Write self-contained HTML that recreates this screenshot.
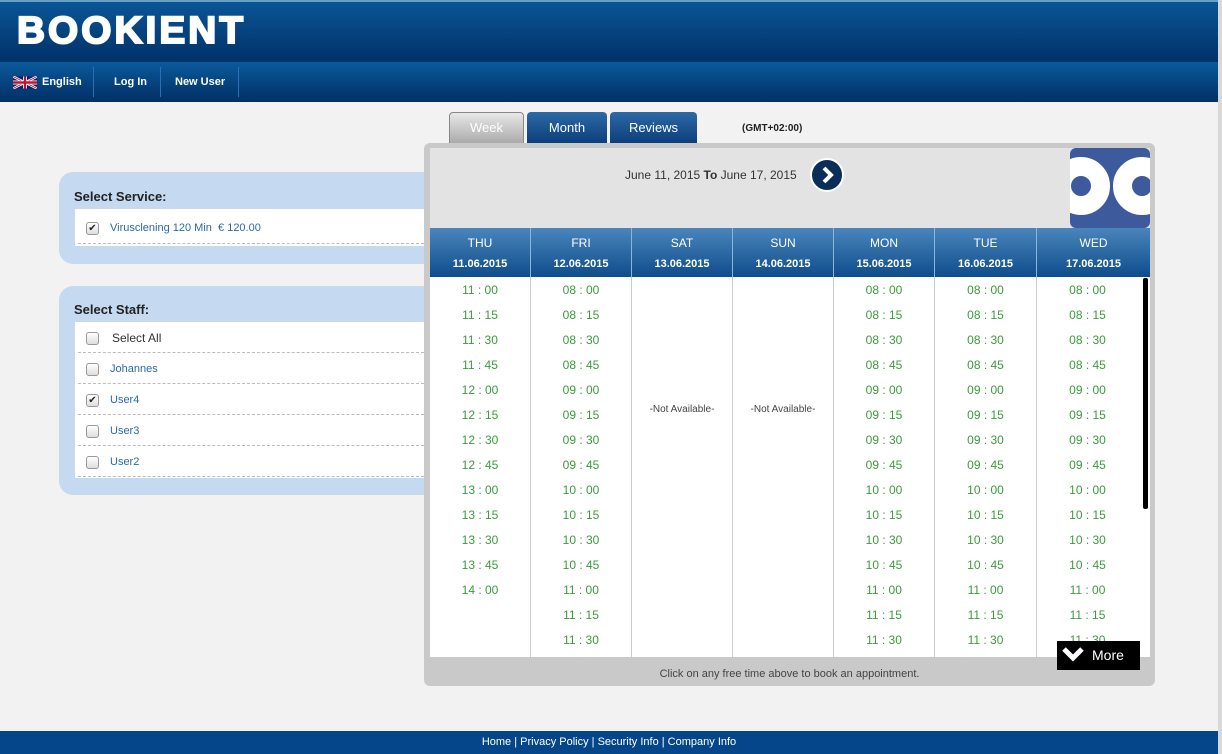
<!DOCTYPE html>
<html><head><meta charset="utf-8">
<style>
*{margin:0;padding:0;box-sizing:border-box}
body{width:1222px;height:754px;background:#f2f2f2;font-family:"Liberation Sans",sans-serif;position:relative;overflow:hidden}
.a{position:absolute}
#hdr{left:0;top:0;width:1218px;height:62px;background:linear-gradient(#0a5596,#013168);border-top:2px solid #6aa0c8}
#logo{left:17px;top:10px;color:#fff;font:900 38px "Liberation Sans",sans-serif;letter-spacing:3px;-webkit-text-stroke:2px #fff;transform:scaleX(1.02);transform-origin:left}
#nav{left:0;top:62px;width:1218px;height:40px;background:linear-gradient(#0a5a9c,#012f65)}
.nv{color:#fff;font-weight:bold;font-size:11px;top:76px}
.sep{top:67px;width:1px;height:30px;background:#2a6fb8}
#rstrip{left:1218px;top:0;width:4px;height:754px;background:#d8d8d8}
.tab{top:112px;height:31px;border-radius:4px 4px 0 0;color:#fff;font-size:13px;text-align:center;line-height:31px;background:linear-gradient(#2d6aa6,#0b3f7b)}
.panel{background:#c5d9f1;border-radius:14px}
.inner{background:#fff}
.row{height:31px;border-bottom:1px dashed #bbb;position:relative;font-size:11px;color:#2a6aa6}
.cb{position:absolute;left:8px;top:10px;width:13px;height:13px;border:1px solid #999;border-radius:3px;background:linear-gradient(#fff,#ddd);font-size:10px;line-height:11px;text-align:center;color:#222}
.row span.t{position:absolute;left:32px;top:10px}
.col{top:277px;height:380px;background:#fff;border-right:1px solid #ccc}
.hd{top:228px;height:49px;background:linear-gradient(#4a86bb,#0e4c8c);color:#fff;text-align:center;border-right:1px solid #8fb5d6}
.hd .n{font-size:12px;margin-top:8px;display:block}
.hd .d{font-weight:bold;font-size:11px;margin-top:8px}
.ts{position:absolute;width:100%;text-align:center;font-size:12px;color:#3c9a3c}
.na{position:absolute;width:100%;text-align:center;font-size:10px;color:#444;top:127px}
</style></head><body>
<div class="a" id="hdr"></div>
<div class="a" id="logo">BOOKIENT</div>
<div class="a" id="nav"></div>
<svg class="a" style="left:13px;top:76px" width="24" height="13" viewBox="0 0 60 30"><rect width="60" height="30" fill="#012169"/><path d="M0,0 60,30M60,0 0,30" stroke="#fff" stroke-width="6"/><path d="M0,0 60,30M60,0 0,30" stroke="#C8102E" stroke-width="2"/><path d="M30,0v30M0,15h60" stroke="#fff" stroke-width="10"/><path d="M30,0v30M0,15h60" stroke="#C8102E" stroke-width="6"/></svg>
<div class="a nv" style="left:42px">English</div>
<div class="a sep" style="left:93px"></div>
<div class="a nv" style="left:114px">Log In</div>
<div class="a sep" style="left:160px"></div>
<div class="a nv" style="left:175px">New User</div>
<div class="a sep" style="left:238px"></div>
<div class="a" id="rstrip"></div>

<div class="a tab" style="left:449px;width:75px;background:linear-gradient(#e8e8e8,#aaa);border:1px solid #888;border-bottom:none;line-height:30px">Week</div>
<div class="a tab" style="left:527px;width:80px">Month</div>
<div class="a tab" style="left:610px;width:87px">Reviews</div>
<div class="a" style="left:742px;top:123px;font-size:10px;font-weight:bold;color:#222">(GMT+02:00)</div>

<div class="a panel" style="left:59px;top:172px;width:380px;height:92px"></div>
<div class="a" style="left:74px;top:189px;font-weight:bold;font-size:13px;color:#222">Select Service:</div>
<div class="a inner" style="left:75px;top:209px;width:352px;height:37px;padding:0 3px">
<div class="row" style="height:35px"><div class="cb" style="top:13px">✔</div><span class="t" style="top:13px">Virusclening 120 Min &nbsp;€ 120.00</span></div></div>

<div class="a panel" style="left:59px;top:286px;width:380px;height:209px"></div>
<div class="a" style="left:74px;top:302px;font-weight:bold;font-size:13px;color:#222">Select Staff:</div>
<div class="a inner" style="left:75px;top:322px;width:352px;height:156px;padding:0 3px">
<div class="row"><div class="cb">&nbsp;</div><span class="t" style="left:34px;top:9px;color:#333;font-size:12px">Select All</span></div>
<div class="row"><div class="cb">&nbsp;</div><span class="t">Johannes</span></div>
<div class="row"><div class="cb">✔</div><span class="t">User4</span></div>
<div class="row"><div class="cb">&nbsp;</div><span class="t">User3</span></div>
<div class="row"><div class="cb">&nbsp;</div><span class="t">User2</span></div>
</div>

<div class="a" style="left:424px;top:143px;width:731px;height:543px;background:#c9c9c9;border-radius:6px"></div>
<div class="a" style="left:430px;top:148px;width:720px;height:80px;background:#e3e3e3"></div>
<div class="a" style="left:625px;top:168px;font-size:12px;color:#333">June 11, 2015 <b>To</b> June 17, 2015</div>
<div class="a" style="left:810px;top:158px;width:34px;height:34px;border-radius:50%;background:#0b2d5a;border:2px solid #fff"></div>
<svg class="a" style="left:810px;top:158px" width="34" height="34"><path d="M14 10l7 7-7 7" stroke="#fff" stroke-width="4" fill="none"/></svg>
<svg class="a" style="left:1070px;top:148px" width="80" height="80"><defs><clipPath id="c"><rect width="80" height="80" rx="6"/></clipPath></defs><g clip-path="url(#c)"><rect width="80" height="80" fill="#3d5a9c"/><circle cx="11" cy="38" r="19.5" fill="none" stroke="#fff" stroke-width="19"/><circle cx="72" cy="38" r="19.5" fill="none" stroke="#fff" stroke-width="19"/></g></svg>

<div class="a hd" style="left:430px;width:101px"><span class="n">THU</span><div class="d">11.06.2015</div></div>
<div class="a hd" style="left:531px;width:101px"><span class="n">FRI</span><div class="d">12.06.2015</div></div>
<div class="a hd" style="left:632px;width:101px"><span class="n">SAT</span><div class="d">13.06.2015</div></div>
<div class="a hd" style="left:733px;width:101px"><span class="n">SUN</span><div class="d">14.06.2015</div></div>
<div class="a hd" style="left:834px;width:101px"><span class="n">MON</span><div class="d">15.06.2015</div></div>
<div class="a hd" style="left:935px;width:102px"><span class="n">TUE</span><div class="d">16.06.2015</div></div>
<div class="a hd" style="left:1037px;width:113px;border-right:none"><span class="n">WED</span><div class="d">17.06.2015</div></div>

<div class="a col" style="left:430px;width:101px">
<div class="ts" style="top:6px">11 : 00</div><div class="ts" style="top:31px">11 : 15</div><div class="ts" style="top:56px">11 : 30</div><div class="ts" style="top:81px">11 : 45</div><div class="ts" style="top:106px">12 : 00</div><div class="ts" style="top:131px">12 : 15</div><div class="ts" style="top:156px">12 : 30</div><div class="ts" style="top:181px">12 : 45</div><div class="ts" style="top:206px">13 : 00</div><div class="ts" style="top:231px">13 : 15</div><div class="ts" style="top:256px">13 : 30</div><div class="ts" style="top:281px">13 : 45</div><div class="ts" style="top:306px">14 : 00</div>
</div>
<div class="a col" style="left:531px;width:101px">
<div class="ts" style="top:6px">08 : 00</div><div class="ts" style="top:31px">08 : 15</div><div class="ts" style="top:56px">08 : 30</div><div class="ts" style="top:81px">08 : 45</div><div class="ts" style="top:106px">09 : 00</div><div class="ts" style="top:131px">09 : 15</div><div class="ts" style="top:156px">09 : 30</div><div class="ts" style="top:181px">09 : 45</div><div class="ts" style="top:206px">10 : 00</div><div class="ts" style="top:231px">10 : 15</div><div class="ts" style="top:256px">10 : 30</div><div class="ts" style="top:281px">10 : 45</div><div class="ts" style="top:306px">11 : 00</div><div class="ts" style="top:331px">11 : 15</div><div class="ts" style="top:356px">11 : 30</div>
</div>
<div class="a col" style="left:632px;width:101px"><div class="na">-Not Available-</div></div>
<div class="a col" style="left:733px;width:101px"><div class="na">-Not Available-</div></div>
<div class="a col" style="left:834px;width:101px">
<div class="ts" style="top:6px">08 : 00</div><div class="ts" style="top:31px">08 : 15</div><div class="ts" style="top:56px">08 : 30</div><div class="ts" style="top:81px">08 : 45</div><div class="ts" style="top:106px">09 : 00</div><div class="ts" style="top:131px">09 : 15</div><div class="ts" style="top:156px">09 : 30</div><div class="ts" style="top:181px">09 : 45</div><div class="ts" style="top:206px">10 : 00</div><div class="ts" style="top:231px">10 : 15</div><div class="ts" style="top:256px">10 : 30</div><div class="ts" style="top:281px">10 : 45</div><div class="ts" style="top:306px">11 : 00</div><div class="ts" style="top:331px">11 : 15</div><div class="ts" style="top:356px">11 : 30</div>
</div>
<div class="a col" style="left:935px;width:102px">
<div class="ts" style="top:6px">08 : 00</div><div class="ts" style="top:31px">08 : 15</div><div class="ts" style="top:56px">08 : 30</div><div class="ts" style="top:81px">08 : 45</div><div class="ts" style="top:106px">09 : 00</div><div class="ts" style="top:131px">09 : 15</div><div class="ts" style="top:156px">09 : 30</div><div class="ts" style="top:181px">09 : 45</div><div class="ts" style="top:206px">10 : 00</div><div class="ts" style="top:231px">10 : 15</div><div class="ts" style="top:256px">10 : 30</div><div class="ts" style="top:281px">10 : 45</div><div class="ts" style="top:306px">11 : 00</div><div class="ts" style="top:331px">11 : 15</div><div class="ts" style="top:356px">11 : 30</div>
</div>
<div class="a col" style="left:1037px;width:113px;border-right:none">
<div class="ts" style="top:6px;width:101px">08 : 00</div><div class="ts" style="top:31px;width:101px">08 : 15</div><div class="ts" style="top:56px;width:101px">08 : 30</div><div class="ts" style="top:81px;width:101px">08 : 45</div><div class="ts" style="top:106px;width:101px">09 : 00</div><div class="ts" style="top:131px;width:101px">09 : 15</div><div class="ts" style="top:156px;width:101px">09 : 30</div><div class="ts" style="top:181px;width:101px">09 : 45</div><div class="ts" style="top:206px;width:101px">10 : 00</div><div class="ts" style="top:231px;width:101px">10 : 15</div><div class="ts" style="top:256px;width:101px">10 : 30</div><div class="ts" style="top:281px;width:101px">10 : 45</div><div class="ts" style="top:306px;width:101px">11 : 00</div><div class="ts" style="top:331px;width:101px">11 : 15</div><div class="ts" style="top:356px;width:101px">11 : 30</div>
</div>
<div class="a" style="left:1143px;top:278px;width:5px;height:231px;background:#000;border-radius:2px"></div>
<div class="a" style="left:1057px;top:641px;width:83px;height:29px;background:#000;color:#fff;font-size:14px;line-height:28px;padding-left:35px">More</div>
<svg class="a" style="left:1062px;top:646px" width="22" height="16"><path d="M2 3l9 9 9-9" stroke="#fff" stroke-width="5" fill="none"/></svg>
<div class="a" style="left:424px;top:668px;width:731px;text-align:center;font-size:11px;color:#444">Click on any free time above to book an appointment.</div>

<div class="a" style="left:0;top:731px;width:1218px;height:23px;background:#05468a;color:#fff;font-size:11px;text-align:center;line-height:22px">Home | Privacy Policy | Security Info | Company Info</div>
</body></html>
